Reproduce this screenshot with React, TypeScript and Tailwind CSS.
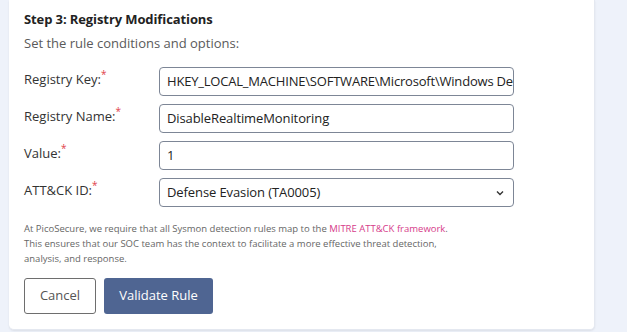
import React from "react";

const Label = ({ text }: { text: string }) => (
  <div className="w-[135px] shrink-0 pt-[2px] text-[13px] leading-[20px] text-[#333]">
    {text}
    <span className="relative -top-[6px] text-[10px] text-[#e0424b]">*</span>
  </div>
);

export default function App() {
  return (
    <div
      className="w-[627px] h-[332px] bg-[#eef2fa] pl-[9px] overflow-hidden"
      style={{ fontFamily: '"Open Sans", "Noto Sans", sans-serif' }}
    >
      <div className="w-[586px] h-[330px] bg-white rounded-b-[5px] shadow-[0_1px_2px_rgba(0,0,0,0.08)] border-r border-b border-[#e4e8f0] pl-[15px] pt-[9px]">
        <div className="text-[13px] leading-[20px] font-bold text-[#222] tracking-[-0.1px]">
          Step 3: Registry Modifications
        </div>
        <div className="mt-[4px] text-[13px] leading-[20px] text-[#5a5a5a]">
          Set the rule conditions and options:
        </div>
        <div className="mt-[14px] flex flex-col gap-[8px]">
          <div className="flex">
            <Label text="Registry Key:" />
            <div className="w-[355px] h-[29px] border border-[#7d8696] rounded-[4px] px-[7px] flex items-center text-[13px] tracking-[-0.2px] text-[#222] overflow-hidden whitespace-nowrap">
              HKEY_LOCAL_MACHINE\SOFTWARE\Microsoft\Windows Defender
            </div>
          </div>
          <div className="flex">
            <Label text="Registry Name:" />
            <div className="w-[355px] h-[29px] border border-[#7d8696] rounded-[4px] px-[7px] flex items-center text-[13px] tracking-[-0.1px] text-[#222]">
              DisableRealtimeMonitoring
            </div>
          </div>
          <div className="flex">
            <Label text="Value:" />
            <div className="w-[355px] h-[29px] border border-[#7d8696] rounded-[4px] px-[7px] flex items-center text-[13px] text-[#222]">
              1
            </div>
          </div>
          <div className="flex">
            <Label text="ATT&CK ID:" />
            <div className="w-[355px] h-[29px] border border-[#7d8696] rounded-[4px] pl-[7px] pr-[9px] flex items-center justify-between text-[13px] tracking-[-0.1px] text-[#222]">
              <span>Defense Evasion (TA0005)</span>
              <svg width="8" height="6" viewBox="0 0 8 6" fill="none">
                <path d="M1 1.5 L4 4.5 L7 1.5" stroke="#333" strokeWidth="1.4" />
              </svg>
            </div>
          </div>
        </div>
        <div className="mt-[14px] w-[450px] text-[9.5px] leading-[15px] text-[#666]">
          At PicoSecure, we require that all Sysmon detection rules map to the{" "}
          <span className="text-[#d63c8a]">MITRE ATT&amp;CK framework</span>.
          <br />
          This ensures that our SOC team has the context to facilitate a more effective threat
          detection,
          <br />
          analysis, and response.
        </div>
        <div className="mt-[12px] flex gap-[8px]">
          <div className="w-[72px] h-[36px] border border-[#6e6e6e] rounded-[3px] flex items-center justify-center text-[13px] text-[#555]">
            Cancel
          </div>
          <div className="w-[109px] h-[36px] bg-[#4f6592] rounded-[3px] flex items-center justify-center text-[13px] text-white">
            Validate Rule
          </div>
        </div>
      </div>
    </div>
  );
}
